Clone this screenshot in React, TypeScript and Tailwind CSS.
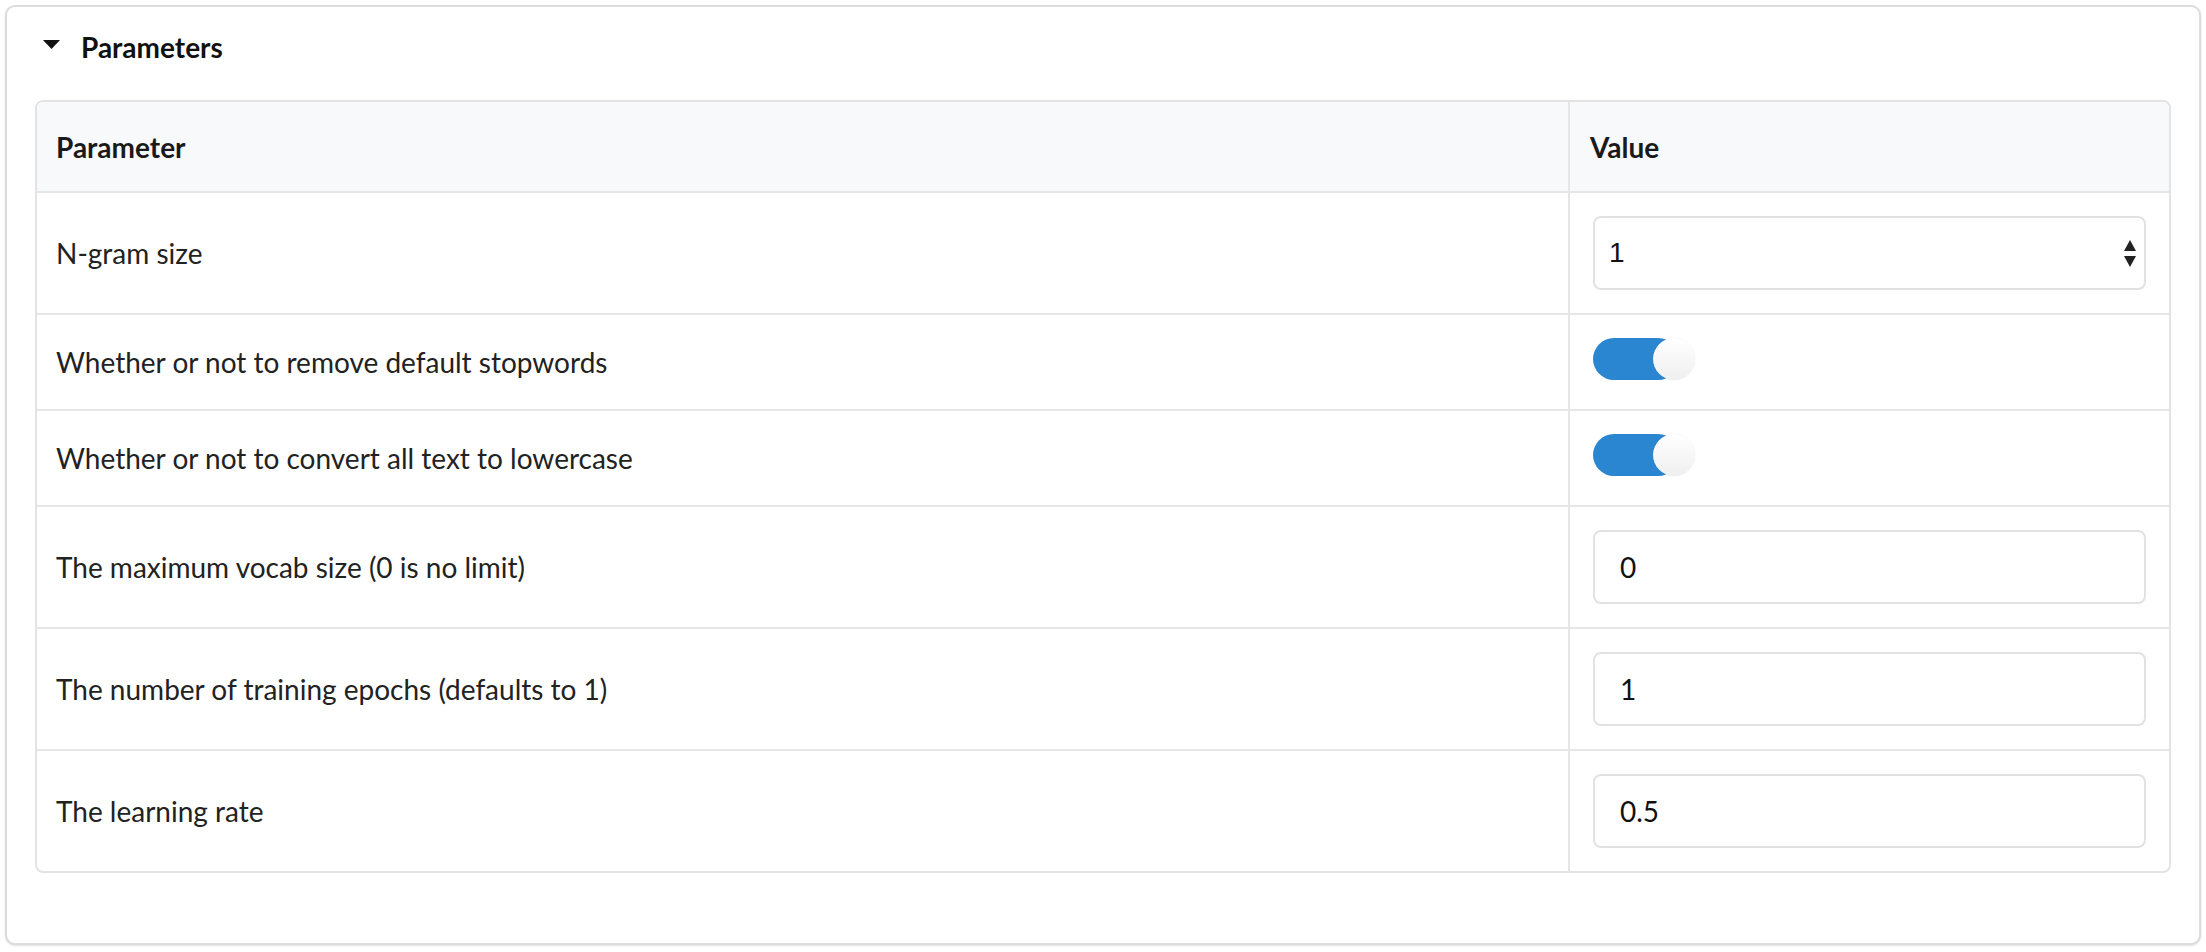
import React from "react";

const rows: { label: string; kind: "select" | "toggle" | "input"; value?: string; h: string }[] = [
  { label: "N-gram size", kind: "select", value: "1", h: "h-[122px] border-b-2" },
  { label: "Whether or not to remove default stopwords", kind: "toggle", h: "h-[96px] border-b-2" },
  { label: "Whether or not to convert all text to lowercase", kind: "toggle", h: "h-[96px] border-b-2" },
  { label: "The maximum vocab size (0 is no limit)", kind: "input", value: "0", h: "h-[122px] border-b-2" },
  { label: "The number of training epochs (defaults to 1)", kind: "input", value: "1", h: "h-[122px] border-b-2" },
  { label: "The learning rate", kind: "input", value: "0.5", h: "h-[120px]" },
];

function Toggle() {
  return (
    <div className="relative w-[102px] h-[42px] mb-[6px]">
      <div className="absolute left-0 top-0 h-[42px] w-[86px] rounded-full bg-[#2a86d0]" />
      <div className="absolute right-0 top-0 h-[42px] w-[42px] rounded-full bg-gradient-to-b from-white to-[#efefef] shadow-[0_0_1px_rgba(0,0,0,0.15)]" />
    </div>
  );
}

function SelectBox({ value }: { value: string }) {
  return (
    <div className="relative flex h-[74px] w-full items-center rounded-[8px] border-2 border-[#e2e2e2] bg-white pl-[14px] font-['Liberation_Sans',Arial,sans-serif] text-[28px] text-[#111]">
      <span>{value}</span>
      <svg className="absolute right-[8px] top-[22px]" width="12" height="27" viewBox="0 0 12 27">
        <polygon points="6,0 12,11 0,11" fill="#222" />
        <polygon points="0,16 12,16 6,27" fill="#222" />
      </svg>
    </div>
  );
}

function InputBox({ value }: { value: string }) {
  return (
    <div className="flex h-[74px] w-full items-center rounded-[8px] border-2 border-[#e2e2e2] bg-white pl-[25px] text-[28px] text-[#111]">
      <span>{value}</span>
    </div>
  );
}

export default function App() {
  return (
    <div className="w-[2206px] h-[952px] bg-white p-[5px] font-['Lato',sans-serif] text-[#222]">
      <div className="w-[2196px] h-[940px] rounded-[10px] border-2 border-[#dcdcdc] bg-white px-[28px] pt-[23px] shadow-[0_1px_2px_rgba(0,0,0,0.12)]">
        <div className="flex items-center h-[34px]">
          <svg className="ml-[8px] mb-[5px]" width="17" height="9" viewBox="0 0 17 9">
            <polygon points="0,0 17,0 8.5,9" fill="#111" />
          </svg>
          <span className="ml-[21px] text-[28px] leading-[34px] font-bold text-[#111]">Parameters</span>
        </div>
        <div className="mt-[36px] rounded-[8px] border-2 border-[#e3e3e3] overflow-hidden">
          <div className="grid grid-cols-[1531px_1fr] h-[91px] border-b-2 border-[#e6e6e6] bg-[#f8f9fa]">
            <div className="flex items-center px-[19px] text-[28px] font-bold text-[#1a1a1a]">Parameter</div>
            <div className="flex items-center border-l-2 border-[#e6e6e6] px-[20px] text-[28px] font-bold text-[#1a1a1a]">Value</div>
          </div>
          {rows.map((r, i) => (
            <div key={i} className={`grid grid-cols-[1531px_1fr] border-[#e6e6e6] ${r.h}`}>
              <div className="flex items-center px-[19px] text-[28px] text-[#222]">{r.label}</div>
              <div className="flex items-center border-l-2 border-[#e6e6e6] px-[23px]">
                {r.kind === "select" && <SelectBox value={r.value!} />}
                {r.kind === "toggle" && <Toggle />}
                {r.kind === "input" && <InputBox value={r.value!} />}
              </div>
            </div>
          ))}
        </div>
      </div>
    </div>
  );
}
